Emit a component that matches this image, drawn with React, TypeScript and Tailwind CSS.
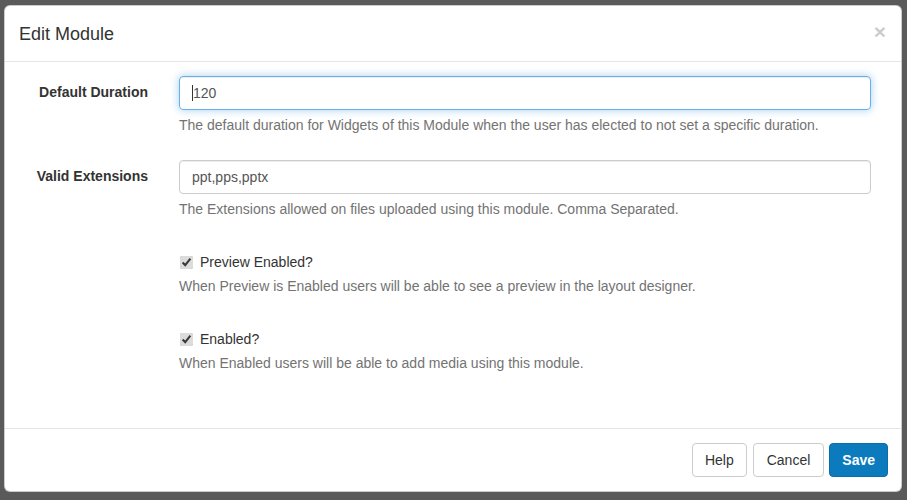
import React from 'react';

const font = { fontFamily: '"Liberation Sans", Arial, sans-serif' };

export default function App() {
  return (
    <div style={font} className="w-[907px] h-[500px] bg-[#5a5a5a] pt-[5px] pl-[4px] overflow-hidden">
      <div className="w-[898px] h-[487px] bg-white rounded-[6px] border border-[#00000033] flex flex-col text-[14px] leading-[20px] text-[#333]">
        <div className="h-[56px] shrink-0 px-[15px] flex items-center justify-between border-b border-[#e5e5e5]">
          <h4 className="text-[18px] leading-[26px] text-[#333] -ml-[1px]">Edit Module</h4>
          <button className="text-[21px] font-bold leading-none text-black opacity-20 -mt-[4px]">×</button>
        </div>

        <div className="flex-1 pt-[14px] flex flex-col">
          <Row label="Default Duration" help="The default duration for Widgets of this Module when the user has elected to not set a specific duration.">
            <div className="h-[34px] rounded-[4px] border border-[#66afe9] shadow-[inset_0_1px_1px_rgba(0,0,0,0.075),0_0_8px_rgba(102,175,233,0.6)] px-[12px] flex items-center text-[#555]">
              <span className="w-px h-[16px] bg-[#333]" />
              <span>120</span>
            </div>
          </Row>
          <Row label="Valid Extensions" help="The Extensions allowed on files uploaded using this module. Comma Separated.">
            <div className="h-[34px] rounded-[4px] border border-[#ccc] shadow-[inset_0_1px_1px_rgba(0,0,0,0.075)] px-[12px] flex items-center text-[#555]">
              ppt,pps,pptx
            </div>
          </Row>
          <CheckRow label="Preview Enabled?" help="When Preview is Enabled users will be able to see a preview in the layout designer." />
          <CheckRow label="Enabled?" help="When Enabled users will be able to add media using this module." />
        </div>

        <div className="h-[63px] shrink-0 border-t border-[#e5e5e5] pl-[15px] pr-[13px] flex items-center justify-end gap-[6px]">
          <button className="h-[34px] px-[12px] rounded-[4px] border border-[#ccc] bg-white text-[#333]">Help</button>
          <button className="h-[34px] px-[13px] rounded-[4px] border border-[#ccc] bg-white text-[#333] mr-[-1px]">Cancel</button>
          <button className="h-[34px] px-[12px] rounded-[4px] border border-[#0a6ea9] bg-[#0b7bbd] text-white font-bold">Save</button>
        </div>
      </div>
    </div>
  );
}

function Row({ label, help, children }: { label: string; help: string; children: React.ReactNode }) {
  return (
    <div className="flex mb-[25px]">
      <label className="w-[143px] shrink-0 text-right font-bold pt-[6px]">{label}</label>
      <div className="ml-[31px] w-[692px]">
        {children}
        <p className="mt-[5px] text-[#737373]">{help}</p>
      </div>
    </div>
  );
}

function CheckRow({ label, help }: { label: string; help: string }) {
  return (
    <div className="flex mb-[25px]">
      <div className="w-[143px] shrink-0" />
      <div className="ml-[31px] w-[692px]">
        <label className="flex items-center pt-[8px]">
          <input type="checkbox" defaultChecked className="w-[13px] h-[13px] m-0 ml-[1px] accent-[#dcdcdc]" />
          <span className="ml-[7px]">{label}</span>
        </label>
        <p className="mt-[4px] text-[#737373]">{help}</p>
      </div>
    </div>
  );
}
